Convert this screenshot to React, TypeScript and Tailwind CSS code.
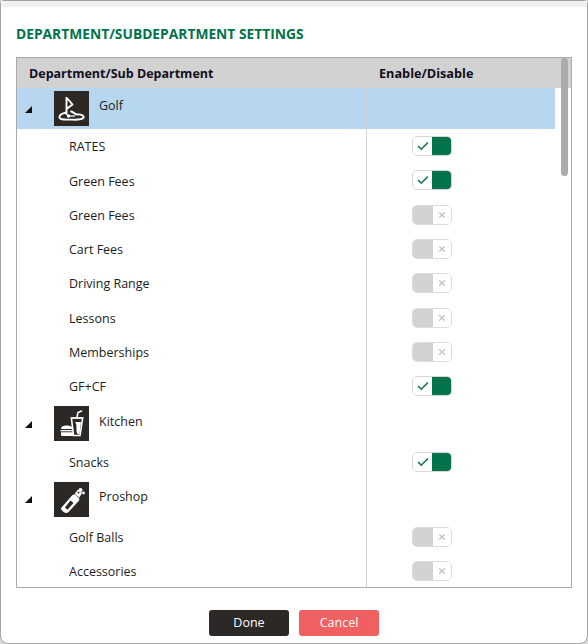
import React from "react";

function Toggle({ on }: { on: boolean }) {
  if (on) {
    return (
      <div className="flex h-5 w-10 overflow-hidden rounded-[5px] border border-[#d6d6d6]">
        <div className="flex w-[19px] items-center justify-center bg-white">
          <svg width="12" height="10" viewBox="0 0 12 10" fill="none">
            <path d="M1 5.2 L4.3 8.2 L10.8 1.6" stroke="#1f7a55" strokeWidth="1.6" />
          </svg>
        </div>
        <div className="-my-px -mr-px flex-1 bg-[#00734a]" />
      </div>
    );
  }
  return (
    <div className="flex h-5 w-10 overflow-hidden rounded-[5px] border border-[#dcdcdc]">
      <div className="-my-px -ml-px w-[21px] bg-[#d2d2d2]" />
      <div className="flex flex-1 items-center justify-center bg-white">
        <svg width="8" height="8" viewBox="0 0 8 8" fill="none">
          <path d="M1.2 1.2 L6.8 6.8 M6.8 1.2 L1.2 6.8" stroke="#c4c4c4" strokeWidth="1.4" />
        </svg>
      </div>
    </div>
  );
}

function GolfIcon() {
  return (
    <svg width="35" height="35" viewBox="0 0 35 35" fill="none" stroke="#fff" strokeWidth="1.9">
      <path d="M12.5 6 V24 M12.5 6.5 L18.5 13.5 L12.5 18" strokeLinejoin="round" />
      <path d="M12 21.5 C8 22.5 5 24.5 5.5 26.8 C6 29 11 28.6 15 28.6 C20 28.6 28 29.5 29.5 26.8 C30.5 24.5 26 23 24 23.5 C21 24 20 21 17 20.5" strokeLinecap="round" />
      <path d="M13 25 H21" strokeWidth="1.3" />
      <circle cx="14.5" cy="25" r="1.7" fill="#fff" stroke="none" />
    </svg>
  );
}

function KitchenIcon() {
  return (
    <svg width="35" height="35" viewBox="0 0 35 35" fill="none" stroke="#fff" strokeWidth="1.6">
      <path d="M23 11 L24 6.5 L27.5 5" strokeLinecap="round" />
      <path d="M16.5 12 H29.5" strokeWidth="1.8" />
      <path d="M17.5 13 L19.5 29.5 H26 L28.5 13" />
      <path d="M21 16 C24 19 21 23 23.5 28 L25.5 28 L27 16 Z" fill="#fff" stroke="none" />
      <path d="M7 23 C7 20.5 9.5 19.5 13 19.5 C15.5 19.5 18 20.3 18.5 22 V23 Z" fill="#fff" stroke="none" />
      <path d="M6.5 24.7 H18.5" strokeWidth="1.3" />
      <path d="M7 26.3 H19 V30 H8 C7 30 7 29 7 28 Z" fill="#fff" stroke="none" />
    </svg>
  );
}

function ProshopIcon() {
  return (
    <svg width="35" height="35" viewBox="0 0 35 35" fill="none">
      <path d="M7.5 25.5 L18 13.5 C19 12.5 20.5 12.3 21.5 13 L24.5 15.5 C25.5 16.5 25.7 18 24.7 19 L14.5 30 C13.2 31.3 11.5 31.3 10 30.2 L8 28.5 C6.8 27.5 6.7 26.5 7.5 25.5 Z" fill="#fff" />
      <path d="M11 25.5 L16.5 18.5 L19.5 21 L13.5 27.8 Z" fill="#2b2826" />
      <path d="M20.5 12 L24 7.5 L28 11 L25.5 15.5 Z" fill="#fff" />
      <circle cx="24.5" cy="10.5" r="1" fill="#2b2826" />
      <circle cx="26.5" cy="8" r="2" fill="#fff" />
      <circle cx="29.5" cy="11" r="1.4" fill="#fff" />
    </svg>
  );
}

function Parent({ label, icon, active }: { label: string; icon: React.ReactNode; active?: boolean }) {
  return (
    <div className={`flex h-[41px] w-[538px] shrink-0 items-center ${active ? "bg-[#b7d6ef]" : ""}`}>
      <div className="flex w-[350px] shrink-0 items-center self-stretch border-r border-[#d4d4d4]">
        <svg width="7" height="7" viewBox="0 0 7 7" className="ml-[8px] mt-[1px] shrink-0">
          <path d="M7 0 V7 H0 Z" fill="#111" />
        </svg>
        <div className="ml-[22px] flex h-[35px] w-[35px] shrink-0 items-center justify-center bg-[#2b2826]">{icon}</div>
        <span className="mb-[4px] ml-[10px] text-[#1c1c1c]">{label}</span>
      </div>
    </div>
  );
}

function Child({ label, on }: { label: string; on: boolean }) {
  return (
    <div className="flex h-[34.3px] w-[538px] shrink-0">
      <div className="flex w-[350px] shrink-0 items-center border-r border-[#d4d4d4] pl-[52px] pt-[3px] text-[#1c1c1c]">{label}</div>
      <div className="flex flex-1 items-center pl-[45px]">
        <Toggle on={on} />
      </div>
    </div>
  );
}

export default function App() {
  return (
    <div className="h-[644px] w-[588px] overflow-hidden bg-[#d9d9d9] font-['Open_Sans',sans-serif] text-[12.5px]">
      <div className="flex h-full flex-col rounded-b-lg rounded-t-sm border border-[#a3a3a3] bg-white">
        <div className="h-[6px] shrink-0 bg-[#f1f1f1]" />
        <h1 className="mt-[19px] ml-[15px] text-[13.8px] leading-[16px] font-bold text-[#00734a]">DEPARTMENT/SUBDEPARTMENT SETTINGS</h1>
        <div className="relative mt-[15px] ml-[15px] h-[531px] w-[556px] shrink-0 overflow-hidden border border-[#a9a9a9]">
          <div className="flex h-[30px] items-center bg-[#d2d2d2] pt-[2px] font-bold text-[#101020]">
            <div className="w-[350px] pl-3">Department/Sub Department</div>
            <div className="pl-[12px] text-[12.7px]">Enable/Disable</div>
          </div>
          <div className="flex flex-col">
            <Parent label="Golf" icon={<GolfIcon />} active />
            <Child label="RATES" on />
            <Child label="Green Fees" on />
            <Child label="Green Fees" on={false} />
            <Child label="Cart Fees" on={false} />
            <Child label="Driving Range" on={false} />
            <Child label="Lessons" on={false} />
            <Child label="Memberships" on={false} />
            <Child label="GF+CF" on />
            <Parent label="Kitchen" icon={<KitchenIcon />} />
            <Child label="Snacks" on />
            <Parent label="Proshop" icon={<ProshopIcon />} />
            <Child label="Golf Balls" on={false} />
            <Child label="Accessories" on={false} />
          </div>
          <div className="absolute top-0 right-[3px] h-[118px] w-[7px] rounded-full bg-[#ababab]" />
        </div>
        <div className="mt-[22px] flex justify-center gap-[10px]">
          <button className="h-[26px] w-20 rounded-[3px] bg-[#2b2826] text-[12.5px] text-white">Done</button>
          <button className="h-[26px] w-20 rounded-[3px] bg-[#f06060] text-[12.5px] text-white">Cancel</button>
        </div>
      </div>
    </div>
  );
}
